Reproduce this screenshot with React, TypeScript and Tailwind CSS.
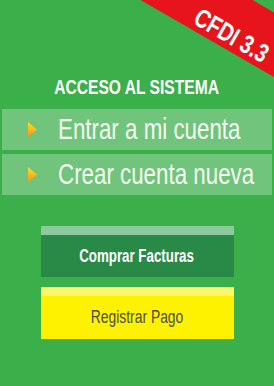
const font = { fontFamily: '"Liberation Sans", Arial, sans-serif' };

const Arrow = () => (
  <svg width="9" height="15" viewBox="0 0 9 15" className="shrink-0">
    <defs>
      <linearGradient id="arr" x1="0" y1="0" x2="0" y2="1">
        <stop offset="0" stopColor="#ffe21a" />
        <stop offset="1" stopColor="#f7941d" />
      </linearGradient>
    </defs>
    <path d="M0 0 L9 7.5 L0 15 Z" fill="url(#arr)" />
  </svg>
);

const MenuRow = ({ label }: { label: string }) => (
  <div className="mx-[2px] flex h-[41px] items-center bg-[#71c47b] pl-[26px]">
    <Arrow />
    <span className="ml-[21px] inline-block origin-left scale-x-[0.77] whitespace-nowrap text-[29px] leading-none text-[#f4fbf2]">
      {label}
    </span>
  </div>
);

export default function App() {
  return (
    <div
      className="relative flex h-[386px] w-[274px] flex-col overflow-hidden bg-[#3aaf4a]"
      style={font}
    >
      {/* corner ribbon */}
      <div className="absolute left-[96px] top-[-11px] flex h-[56px] w-[260px] rotate-[30deg] items-center justify-center bg-[#e8141c]">
        <span className="inline-block translate-x-[14px] translate-y-[13px] scale-x-[0.78] whitespace-nowrap text-[26px] leading-none font-bold text-white">
          CFDI 3.3
        </span>
      </div>

      <h1 className="mt-[77px] flex justify-center">
        <span className="inline-block scale-x-[0.78] whitespace-nowrap text-[20px] font-bold leading-none text-white">
          ACCESO AL SISTEMA
        </span>
      </h1>

      <div className="mt-[12px] flex flex-col gap-[4px]">
        <MenuRow label="Entrar a mi cuenta" />
        <MenuRow label="Crear cuenta nueva" />
      </div>

      <div className="mx-auto mt-[31px] flex w-[193px] flex-col gap-[10px]">
        <button className="flex h-[51px] flex-col bg-[#298a48]">
          <div className="h-[9px] w-full bg-[#8cc99c]" />
          <div className="flex flex-1 items-center justify-center">
            <span className="inline-block scale-x-[0.74] whitespace-nowrap text-[18px] font-bold text-white">
              Comprar Facturas
            </span>
          </div>
        </button>
        <button className="flex h-[52px] flex-col bg-[#fff200]">
          <div className="h-[9px] w-full bg-[#fff56b]" />
          <div className="flex flex-1 items-center justify-center">
            <span className="inline-block scale-x-[0.77] whitespace-nowrap text-[18px] text-[#4d4d4f]">
              Registrar Pago
            </span>
          </div>
        </button>
      </div>
    </div>
  );
}
